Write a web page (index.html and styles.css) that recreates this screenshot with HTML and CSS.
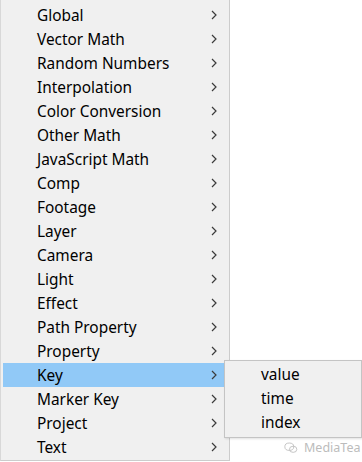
FILE: index.html
```html
<!DOCTYPE html>
<html lang="en">
<head>
  <meta charset="UTF-8" />
  <title>Expression Menu</title>
  <link rel="stylesheet" href="styles.css">
</head>
<body>
  <div class="menu">
    <div class="item"><span>Global</span><svg class="arrow" viewBox="0 0 6 10"><path d="M1 1 L5 5 L1 9" /></svg></div>
    <div class="item"><span>Vector Math</span><svg class="arrow" viewBox="0 0 6 10"><path d="M1 1 L5 5 L1 9" /></svg></div>
    <div class="item"><span>Random Numbers</span><svg class="arrow" viewBox="0 0 6 10"><path d="M1 1 L5 5 L1 9" /></svg></div>
    <div class="item"><span>Interpolation</span><svg class="arrow" viewBox="0 0 6 10"><path d="M1 1 L5 5 L1 9" /></svg></div>
    <div class="item"><span>Color Conversion</span><svg class="arrow" viewBox="0 0 6 10"><path d="M1 1 L5 5 L1 9" /></svg></div>
    <div class="item"><span>Other Math</span><svg class="arrow" viewBox="0 0 6 10"><path d="M1 1 L5 5 L1 9" /></svg></div>
    <div class="item"><span>JavaScript Math</span><svg class="arrow" viewBox="0 0 6 10"><path d="M1 1 L5 5 L1 9" /></svg></div>
    <div class="item"><span>Comp</span><svg class="arrow" viewBox="0 0 6 10"><path d="M1 1 L5 5 L1 9" /></svg></div>
    <div class="item"><span>Footage</span><svg class="arrow" viewBox="0 0 6 10"><path d="M1 1 L5 5 L1 9" /></svg></div>
    <div class="item"><span>Layer</span><svg class="arrow" viewBox="0 0 6 10"><path d="M1 1 L5 5 L1 9" /></svg></div>
    <div class="item"><span>Camera</span><svg class="arrow" viewBox="0 0 6 10"><path d="M1 1 L5 5 L1 9" /></svg></div>
    <div class="item"><span>Light</span><svg class="arrow" viewBox="0 0 6 10"><path d="M1 1 L5 5 L1 9" /></svg></div>
    <div class="item"><span>Effect</span><svg class="arrow" viewBox="0 0 6 10"><path d="M1 1 L5 5 L1 9" /></svg></div>
    <div class="item"><span>Path Property</span><svg class="arrow" viewBox="0 0 6 10"><path d="M1 1 L5 5 L1 9" /></svg></div>
    <div class="item"><span>Property</span><svg class="arrow" viewBox="0 0 6 10"><path d="M1 1 L5 5 L1 9" /></svg></div>
    <div class="item active"><span>Key</span><svg class="arrow" viewBox="0 0 6 10"><path d="M1 1 L5 5 L1 9" /></svg>
      <div class="submenu">
        <div class="subitem">value</div>
        <div class="subitem">time</div>
        <div class="subitem">index</div>
      </div>
    </div>
    <div class="item"><span>Marker Key</span><svg class="arrow" viewBox="0 0 6 10"><path d="M1 1 L5 5 L1 9" /></svg></div>
    <div class="item"><span>Project</span><svg class="arrow" viewBox="0 0 6 10"><path d="M1 1 L5 5 L1 9" /></svg></div>
    <div class="item"><span>Text</span><svg class="arrow" viewBox="0 0 6 10"><path d="M1 1 L5 5 L1 9" /></svg></div>
  </div>

  <div class="watermark">
    <svg class="wx" viewBox="0 0 16 14">
      <ellipse cx="6" cy="5.5" rx="5.2" ry="4.3" />
      <ellipse cx="10.5" cy="8.5" rx="4.3" ry="3.6" />
    </svg>
    <span>MediaTea</span>
  </div>
</body>
</html>
```

FILE: styles.css
```css
body {
  margin: 0;
  width: 362px;
  height: 462px;
  background: #ffffff;
  font-family: 'Noto Sans', 'Open Sans', sans-serif;
  position: relative;
  overflow: hidden;
}
.menu {
  width: 226px;
  height: 457px;
  padding: 3px 0 0 2px;
  background: #f0f0f0;
  border: 1px solid #cccccc;
  border-top: none;
  border-left: 1px solid #d8d8d8;
}
.item {
  height: 24px;
  display: flex;
  align-items: center;
  justify-content: space-between;
  padding: 0 7px 0 34px;
  font-size: 15.4px;
  color: #000000;
  position: relative;
  width: 221px;
  box-sizing: border-box;
}
.item.active {
  background: #91c9f7;
}
.arrow {
  width: 6px;
  height: 10px;
  fill: none;
  stroke: #3c3c3c;
  stroke-width: 1.2;
}
.submenu {
  position: absolute;
  left: 221px;
  top: -3px;
  width: 136px;
  padding: 2px 0;
  background: #f0f0f0;
  border: 1px solid #c4c4c4;
  box-shadow: 1px 1px 2px rgba(0, 0, 0, 0.12);
}
.subitem {
  height: 24px;
  line-height: 24px;
  padding-left: 36px;
  font-size: 15.4px;
}
.watermark {
  position: absolute;
  left: 284px;
  top: 439px;
  display: flex;
  align-items: center;
  gap: 6px;
  color: #bcbcbc;
  font-size: 12.5px;
}
.wx {
  width: 14px;
  height: 12px;
  fill: none;
  stroke: #bcbcbc;
  stroke-width: 1;
}
```
